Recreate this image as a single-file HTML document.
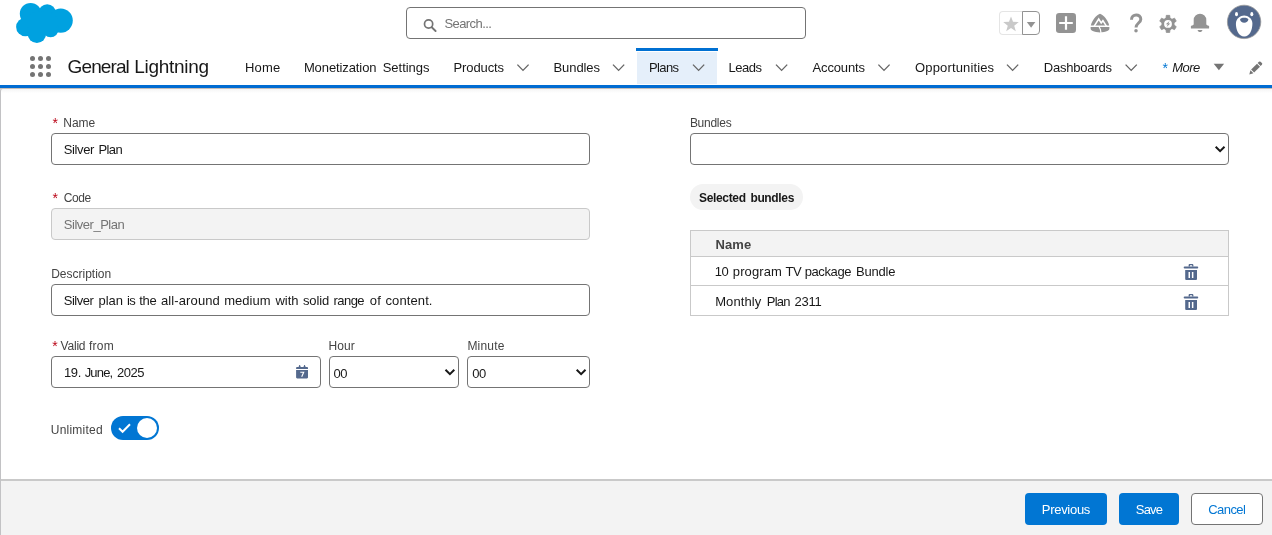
<!DOCTYPE html>
<html><head><meta charset="utf-8"><title>Plan</title>
<style>
html,body{margin:0;padding:0}
body{width:1272px;height:535px;position:relative;overflow:hidden;background:#fff;font-family:"Liberation Sans",sans-serif;color:#181818}
.a{position:absolute}
.t{position:absolute;white-space:pre;line-height:20px}
.box{position:absolute;box-sizing:border-box;border:1px solid #747474;border-radius:4px;background:#fff}
svg{position:absolute;overflow:visible}
</style></head><body>
<!-- ===== global header ===== -->
<svg style="left:0;top:0" width="90" height="48" viewBox="0 0 90 48"><g fill="#00a1e0">
<circle cx="30.6" cy="13.7" r="10.8"/><circle cx="47.2" cy="13" r="8.7"/><circle cx="60.7" cy="20.6" r="12.1"/>
<circle cx="25.4" cy="27" r="9.3"/><circle cx="36.9" cy="33.6" r="9.3"/><circle cx="50.6" cy="29.3" r="8"/>
<ellipse cx="42" cy="22" rx="16" ry="11"/></g></svg>
<div class="box" style="left:406px;top:7px;width:400px;height:32px"></div>
<svg style="left:423px;top:18px" width="14" height="14" viewBox="0 0 14 14"><circle cx="5.6" cy="6" r="4.1" fill="none" stroke="#747474" stroke-width="1.7"/><path d="M8.7 9.2 L12.6 13" stroke="#747474" stroke-width="1.9" stroke-linecap="round"/></svg>

<div class="a" style="left:999px;top:11px;width:24px;height:24px;box-sizing:border-box;border:1px solid #e5e5e5;border-right:0;border-radius:4px 0 0 4px"></div>
<div class="a" style="left:1022px;top:11px;width:18px;height:24px;box-sizing:border-box;border:1px solid #939393;border-radius:0 4px 4px 0"></div>
<svg style="left:0;top:0" width="1272" height="48" viewBox="0 0 1272 48">
<polygon points="1011.00,16.40 1013.00,21.85 1018.80,22.07 1014.23,25.65 1015.82,31.23 1011.00,28.00 1006.18,31.23 1007.77,25.65 1003.20,22.07 1009.00,21.85" fill="#c9c9c9"/>
<path d="M1026.8 22 H1035.4 L1031.1 27.8 Z" fill="#939393"/>
<rect x="1056" y="13" width="20" height="20" rx="3.2" fill="#939393"/>
<path d="M1066 16.2 V29.8 M1059.2 23 H1072.8" stroke="#fff" stroke-width="2.2"/>
<!-- trailhead -->
<path d="M1100 13.7 C1104 15.5 1108 20 1109.2 25.6 H1090.8 C1092 20 1096 15.5 1100 13.7 Z" fill="#939393"/>
<path d="M1090.6 27.1 H1109.4 V28.5 C1109.4 29.6 1108.8 30.2 1107.800 30.700 C1103 33 1097 33 1092.200 30.700 C1091.2 30.2 1090.6 29.6 1090.6 28.500 Z" fill="#939393"/>
<path d="M1094.2 26.100 L1098.700 19 L1101.200 22.900 L1102.900 20.700 L1106.400 26.100" fill="none" stroke="#fff" stroke-width="1.550"/>
<path d="M1099 26.6 L1100.4 29.4 L1101.000 33.2" fill="none" stroke="#fff" stroke-width="1.2"/>
<!-- help -->
<path d="M1131.5 19.700 C1131.500 13.500 1140.800 13.500 1140.800 19.200 C1140.800 22.900 1136 23.200 1136 27.500" fill="none" stroke="#939393" stroke-width="3"/>
<circle cx="1136" cy="30.700" r="1.750" fill="#939393"/>
<!-- gear -->
<path d="M1165.96 18.47 L1166.27 15.37 L1169.73 15.37 L1170.04 18.47 L1171.68 19.42 L1174.52 18.14 L1176.25 21.13 L1173.72 22.96 L1173.72 24.84 L1176.25 26.67 L1174.52 29.66 L1171.68 28.38 L1170.04 29.33 L1169.73 32.43 L1166.27 32.43 L1165.96 29.33 L1164.32 28.38 L1161.48 29.66 L1159.75 26.67 L1162.28 24.84 L1162.28 22.96 L1159.75 21.13 L1161.48 18.14 L1164.32 19.42 Z" fill="#939393" stroke="#939393" stroke-width="0.800" stroke-linejoin="round"/>
<circle cx="1168" cy="23.9" r="6.500" fill="#939393"/>
<circle cx="1168" cy="23.9" r="3.900" fill="#fff"/>
<path d="M1169.500 20.900 L1165.800 24.300 H1167.800 L1166.600 27.100 L1170.300 23.500 H1168.300 Z" fill="#939393"/>
<!-- bell -->
<path d="M1193.700 20 A6.300 6.300 0 0 1 1206.300 20 V24 C1206.300 25 1207.500 25.600 1209.100 25.900 V28.400 H1190.900 V25.900 C1192.500 25.600 1193.700 25 1193.700 24 Z" fill="#939393"/>
<path d="M1197.600 30 H1202.400 C1202.200 31.400 1201.200 32 1200 32 C1198.800 32 1197.800 31.400 1197.600 30 Z" fill="#939393"/>
<!-- avatar -->
<circle cx="1244.1" cy="21.9" r="16.700" fill="#54698d" stroke="#9a9a9a" stroke-width="0.800"/>
<ellipse cx="1236.5" cy="14.2" rx="1.500" ry="2.100" fill="#fff"/>
<ellipse cx="1251.8" cy="14.2" rx="1.500" ry="2.100" fill="#fff"/>
<path d="M1244.2 15.5 C1248 15.5 1252.4 18.5 1252.4 23.7 C1252.4 29 1250 36.5 1244.2 36.5 C1238.4 36.5 1235.9 29 1235.9 23.7 C1235.9 18.5 1240.400 15.500 1244.200 15.500 Z" fill="#fff"/>
<path d="M1240.100 19.600 C1240.100 17.200 1248.300 17.200 1248.300 19.600 C1248.300 21.400 1246.400 22.800 1244.200 22.800 C1242 22.800 1240.100 21.400 1240.100 19.600 Z" fill="#54698d"/>
</svg>

<!-- ===== nav ===== -->
<div class="a" style="left:637px;top:52px;width:80px;height:32px;background:#e5effa"></div>
<div class="a" style="left:636px;top:48px;width:82px;height:3px;background:#0070d2"></div>
<div class="a" style="left:0;top:85px;width:1272px;height:3px;background:#016cd2"></div>
<div class="a" style="left:0;top:88px;width:1272px;height:5px;background:linear-gradient(#c6beb9 0,#c6beb9 1px,#f5f5f5 1px,#fff 5px)"></div>
<div class="a" style="left:0;top:88px;width:4px;height:447px;box-sizing:border-box;border-left:1px solid #c2c2c4;border-top:1px solid #c4c0be;border-top-left-radius:3px"></div>

<svg style="left:0;top:48px" width="1272" height="40" viewBox="0 48 1272 40">
<circle cx="32.5" cy="58.45" r="2.5" fill="#747474"/><circle cx="32.5" cy="66.45" r="2.5" fill="#747474"/><circle cx="32.5" cy="74.45" r="2.5" fill="#747474"/><circle cx="40.5" cy="58.45" r="2.5" fill="#747474"/><circle cx="40.5" cy="66.45" r="2.5" fill="#747474"/><circle cx="40.5" cy="74.45" r="2.5" fill="#747474"/><circle cx="48.5" cy="58.45" r="2.5" fill="#747474"/><circle cx="48.5" cy="66.45" r="2.5" fill="#747474"/><circle cx="48.5" cy="74.45" r="2.5" fill="#747474"/><path d="M517.4 64.6 L523.0 70.4 L528.6 64.6" fill="none" stroke="#666" stroke-width="1.35"/><path d="M613 64.6 L618.6 70.4 L624.2 64.6" fill="none" stroke="#666" stroke-width="1.35"/><path d="M693 64.6 L698.6 70.4 L704.2 64.6" fill="none" stroke="#666" stroke-width="1.35"/><path d="M776 64.6 L781.6 70.4 L787.2 64.6" fill="none" stroke="#666" stroke-width="1.35"/><path d="M878.4 64.6 L884.0 70.4 L889.6 64.6" fill="none" stroke="#666" stroke-width="1.35"/><path d="M1007 64.6 L1012.6 70.4 L1018.2 64.6" fill="none" stroke="#666" stroke-width="1.35"/><path d="M1125.6 64.6 L1131.1999999999998 70.4 L1136.8 64.6" fill="none" stroke="#666" stroke-width="1.35"/>
<path d="M1213.7 63.700 H1224.100 L1218.900 70.200 Z" fill="#747474"/>
<g transform="translate(1249.300 74.400) rotate(-45)" fill="#747474"><path d="M0 0 L3.700 -2.100 V2.100 Z"/><rect x="4.700" y="-2.100" width="8.300" height="4.200"/><path d="M13.900 -2.100 H15.700 a1.200 1.200 0 0 1 1.200 1.200 V0.900 a1.200 1.200 0 0 1 -1.200 1.200 H13.900 Z"/></g>
</svg>

<!-- ===== form left ===== -->
<div class="box" style="left:51px;top:133px;width:539px;height:32px"></div>
<div class="box" style="left:51px;top:208px;width:539px;height:32px;background:#f3f3f3;border-color:#c9c9c9"></div>
<div class="box" style="left:51px;top:284px;width:539px;height:32px"></div>
<div class="box" style="left:51px;top:356px;width:270px;height:32px"></div>
<div class="box" style="left:329px;top:356px;width:130px;height:32px"></div>
<div class="box" style="left:467px;top:356px;width:123px;height:32px"></div>
<!-- toggle -->
<div class="a" style="left:111px;top:416px;width:48px;height:24px;border-radius:12px;background:#0176d3"></div>
<div class="a" style="left:137px;top:418px;width:20px;height:20px;border-radius:10px;background:#fff"></div>
<svg style="left:117px;top:422px" width="16" height="12" viewBox="0 0 16 12"><path d="M2 6.2 L5.6 9.8 L13 2.2" fill="none" stroke="#fff" stroke-width="2"/></svg>
<!-- ===== form right ===== -->
<div class="box" style="left:690px;top:133px;width:539px;height:32px"></div>
<div class="a" style="left:690px;top:184px;width:113px;height:26px;border-radius:13px;background:#f3f3f3"></div>
<div class="a" style="left:690px;top:230px;width:539px;height:86px;box-sizing:border-box;border:1px solid #c9c9c9;background:#fff"></div>
<div class="a" style="left:691px;top:231px;width:537px;height:25px;background:#f3f3f3"></div>
<div class="a" style="left:691px;top:256px;width:537px;height:1px;background:#c9c9c9"></div>
<div class="a" style="left:691px;top:285px;width:537px;height:1px;background:#c9c9c9"></div>
<!-- ===== footer ===== -->
<div class="a" style="left:1px;top:479px;width:1271px;height:2px;background:#c9c9c9"></div>
<div class="a" style="left:1px;top:481px;width:1271px;height:54px;background:#f3f3f3"></div>
<div class="a" style="left:1025px;top:493px;width:82px;height:32px;border-radius:4px;background:#0176d3"></div>
<div class="a" style="left:1119px;top:493px;width:60px;height:32px;border-radius:4px;background:#0176d3"></div>
<div class="box" style="left:1191px;top:493px;width:72px;height:32px"></div>

<svg style="left:0;top:100px" width="1272" height="300" viewBox="0 100 1272 300">
<path d="M445.5 369.8 L449.9 374.2 L454.3 369.8" fill="none" stroke="#181818" stroke-width="2"/><path d="M576.7 369.8 L581.1 374.2 L585.5 369.8" fill="none" stroke="#181818" stroke-width="2"/><path d="M1215.7 146.8 L1220.1 151.2 L1224.5 146.8" fill="none" stroke="#181818" stroke-width="2"/>
<g transform="translate(1184 264)" fill="#54698d" fill-rule="evenodd"><path d="M4.6 2.6 V1.1 C4.6 0.4 5.1 -0.1 5.8 -0.1 H8.2 C8.9 -0.1 9.4 0.4 9.4 1.100 V2.600 Z M6 1.200 H8.100 V2.600 H6 Z"/><rect x="-0.3" y="2.400" width="14.500" height="2.100" rx="0.900"/><path d="M1.200 6.100 H13 V14.800 C13 15.600 12.500 16 11.800 16 H2.400 C1.700 16 1.200 15.600 1.200 14.800 Z M4.500 8 V13.900 H6 V8 Z M7.900 8 V13.900 H9.400 V8 Z"/></g><g transform="translate(1184 294)" fill="#54698d" fill-rule="evenodd"><path d="M4.6 2.6 V1.1 C4.6 0.4 5.1 -0.1 5.8 -0.1 H8.2 C8.9 -0.1 9.4 0.4 9.4 1.100 V2.600 Z M6 1.200 H8.100 V2.600 H6 Z"/><rect x="-0.3" y="2.400" width="14.500" height="2.100" rx="0.900"/><path d="M1.200 6.100 H13 V14.800 C13 15.600 12.500 16 11.800 16 H2.400 C1.700 16 1.200 15.600 1.200 14.800 Z M4.500 8 V13.900 H6 V8 Z M7.900 8 V13.900 H9.400 V8 Z"/></g>
<g fill="#54698d"><path d="M296.1 368 C296.1 367.300 296.500 366.900 297.200 366.900 H306.900 C307.600 366.900 308 367.300 308 368 V369 H296.100 Z"/>
<path d="M298.400 367.500 L299.300 365 H300 L300.900 367.500 Z M303.300 367.500 L304.200 365 H304.900 L305.800 367.500 Z"/>
<path d="M296.100 370.100 H308 V377.300 C308 378 307.600 378.400 306.900 378.400 H297.200 C296.500 378.400 296.100 378 296.100 377.300 Z"/></g>
<path d="M300.300 372.300 H303.700 L301.700 376.800" fill="none" stroke="#fff" stroke-width="1.100"/>
</svg>

<div class="a" style="left:0;top:0;width:1272px;height:535px;will-change:transform">
<div class="t" style="left:444.5px;top:14.4px;font-size:13px;color:#747474;letter-spacing:-0.59px;">Search...</div>
<div class="t" style="left:67.6px;top:57.0px;font-size:19px;color:#181818;letter-spacing:-0.9px;">General</div>
<div class="t" style="left:134.2px;top:57.0px;font-size:19px;color:#181818;letter-spacing:-0.29px;">Lightning</div>
<div class="t" style="left:245.0px;top:58.0px;font-size:13px;color:#181818;letter-spacing:0.17px;">Home</div>
<div class="t" style="left:303.9px;top:58.0px;font-size:13px;color:#181818;letter-spacing:-0.1px;">Monetization</div>
<div class="t" style="left:382.7px;top:58.0px;font-size:13px;color:#181818;letter-spacing:-0.02px;">Settings</div>
<div class="t" style="left:453.5px;top:58.0px;font-size:13px;color:#181818;letter-spacing:-0.11px;">Products</div>
<div class="t" style="left:553.5px;top:58.0px;font-size:13px;color:#181818;letter-spacing:-0.08px;">Bundles</div>
<div class="t" style="left:649.0px;top:58.0px;font-size:13px;color:#181818;letter-spacing:-0.62px;">Plans</div>
<div class="t" style="left:728.5px;top:58.0px;font-size:13px;color:#181818;letter-spacing:-0.5px;">Leads</div>
<div class="t" style="left:812.5px;top:58.0px;font-size:13px;color:#181818;letter-spacing:-0.14px;">Accounts</div>
<div class="t" style="left:915.0px;top:58.0px;font-size:13px;color:#181818;letter-spacing:0.15px;">Opportunities</div>
<div class="t" style="left:1043.8px;top:58.0px;font-size:13px;color:#181818;letter-spacing:-0.21px;">Dashboards</div>
<div class="t" style="left:1162.5px;top:57.5px;font-size:14px;color:#0176d3;">*</div>
<div class="t" style="left:1172.3px;top:58.0px;font-size:13px;color:#181818;letter-spacing:-0.6px;font-style:italic;">More</div>
<div class="t" style="left:52.5px;top:112.8px;font-size:14px;color:#ba0517;">*</div>
<div class="t" style="left:52.5px;top:187.8px;font-size:14px;color:#ba0517;">*</div>
<div class="t" style="left:52.3px;top:335.9px;font-size:14px;color:#ba0517;">*</div>
<div class="t" style="left:63.3px;top:113.0px;font-size:12px;color:#444444;letter-spacing:-0.03px;">Name</div>
<div class="t" style="left:63.8px;top:188.0px;font-size:12px;color:#444444;letter-spacing:-0.45px;">Code</div>
<div class="t" style="left:51.2px;top:264.0px;font-size:12px;color:#444444;">Description</div>
<div class="t" style="left:60.6px;top:336.0px;font-size:12px;color:#444444;letter-spacing:-0.22px;">Valid</div>
<div class="t" style="left:89.0px;top:336.0px;font-size:12px;color:#444444;letter-spacing:0.27px;">from</div>
<div class="t" style="left:328.5px;top:336.0px;font-size:12px;color:#444444;letter-spacing:0.05px;">Hour</div>
<div class="t" style="left:467.4px;top:336.0px;font-size:12px;color:#444444;letter-spacing:0.2px;">Minute</div>
<div class="t" style="left:50.8px;top:420.0px;font-size:12px;color:#444444;letter-spacing:0.22px;">Unlimited</div>
<div class="t" style="left:689.9px;top:113.0px;font-size:12px;color:#444444;letter-spacing:-0.27px;">Bundles</div>
<div class="t" style="left:63.8px;top:140.0px;font-size:13px;color:#181818;letter-spacing:-0.4px;">Silver</div>
<div class="t" style="left:98.4px;top:140.0px;font-size:13px;color:#181818;letter-spacing:-0.58px;">Plan</div>
<div class="t" style="left:63.8px;top:215.0px;font-size:13px;color:#747474;letter-spacing:-0.48px;">Silver_Plan</div>
<div class="t" style="left:63.7px;top:291.0px;font-size:13px;color:#181818;letter-spacing:-0.46px;">Silver</div>
<div class="t" style="left:98.5px;top:291.0px;font-size:13px;color:#181818;">plan</div>
<div class="t" style="left:126.9px;top:291.0px;font-size:13px;color:#181818;letter-spacing:-0.45px;">is</div>
<div class="t" style="left:139.3px;top:291.0px;font-size:13px;color:#181818;letter-spacing:-0.33px;">the</div>
<div class="t" style="left:161.0px;top:291.0px;font-size:13px;color:#181818;letter-spacing:0.11px;">all-around</div>
<div class="t" style="left:224.2px;top:291.0px;font-size:13px;color:#181818;letter-spacing:0.01px;">medium</div>
<div class="t" style="left:275.5px;top:291.0px;font-size:13px;color:#181818;letter-spacing:-0.02px;">with</div>
<div class="t" style="left:303.0px;top:291.0px;font-size:13px;color:#181818;letter-spacing:-0.15px;">solid</div>
<div class="t" style="left:333.6px;top:291.0px;font-size:13px;color:#181818;letter-spacing:-0.57px;">range</div>
<div class="t" style="left:369.8px;top:291.0px;font-size:13px;color:#181818;letter-spacing:0.1px;">of</div>
<div class="t" style="left:385.5px;top:291.0px;font-size:13px;color:#181818;letter-spacing:0.1px;">content.</div>
<div class="t" style="left:64.1px;top:363.0px;font-size:13px;color:#181818;letter-spacing:-0.45px;">19.</div>
<div class="t" style="left:84.7px;top:363.0px;font-size:13px;color:#181818;letter-spacing:-0.83px;">June,</div>
<div class="t" style="left:116.9px;top:363.0px;font-size:13px;color:#181818;letter-spacing:-0.43px;">2025</div>
<div class="t" style="left:333.4px;top:364.0px;font-size:13px;color:#181818;letter-spacing:-0.45px;">00</div>
<div class="t" style="left:472.3px;top:364.0px;font-size:13px;color:#181818;letter-spacing:-0.45px;">00</div>
<div class="t" style="left:699.0px;top:188.0px;font-size:12px;color:#181818;letter-spacing:-0.34px;font-weight:700;">Selected</div>
<div class="t" style="left:750.4px;top:188.0px;font-size:12px;color:#181818;letter-spacing:-0.34px;font-weight:700;">bundles</div>
<div class="t" style="left:715.5px;top:234.6px;font-size:13px;color:#444444;letter-spacing:0.08px;font-weight:700;">Name</div>
<div class="t" style="left:714.8px;top:262.0px;font-size:13px;color:#181818;letter-spacing:-0.45px;">10</div>
<div class="t" style="left:732.8px;top:262.0px;font-size:13px;color:#181818;letter-spacing:0.12px;">program</div>
<div class="t" style="left:785.5px;top:262.0px;font-size:13px;color:#181818;letter-spacing:-0.45px;">TV</div>
<div class="t" style="left:804.7px;top:262.0px;font-size:13px;color:#181818;letter-spacing:-0.39px;">package</div>
<div class="t" style="left:856.1px;top:262.0px;font-size:13px;color:#181818;letter-spacing:-0.22px;">Bundle</div>
<div class="t" style="left:715.2px;top:291.6px;font-size:13px;color:#181818;letter-spacing:0.1px;">Monthly</div>
<div class="t" style="left:766.8px;top:291.6px;font-size:13px;color:#181818;letter-spacing:-0.82px;">Plan</div>
<div class="t" style="left:794.5px;top:291.6px;font-size:13px;color:#181818;letter-spacing:-0.23px;">2311</div>
<div class="t" style="left:1041.8px;top:500.0px;font-size:13px;color:#fff;letter-spacing:-0.29px;">Previous</div>
<div class="t" style="left:1135.8px;top:500.0px;font-size:13px;color:#fff;letter-spacing:-0.82px;">Save</div>
<div class="t" style="left:1208.2px;top:500.0px;font-size:13px;color:#0176d3;letter-spacing:-0.55px;">Cancel</div>
</div>
</body></html>
